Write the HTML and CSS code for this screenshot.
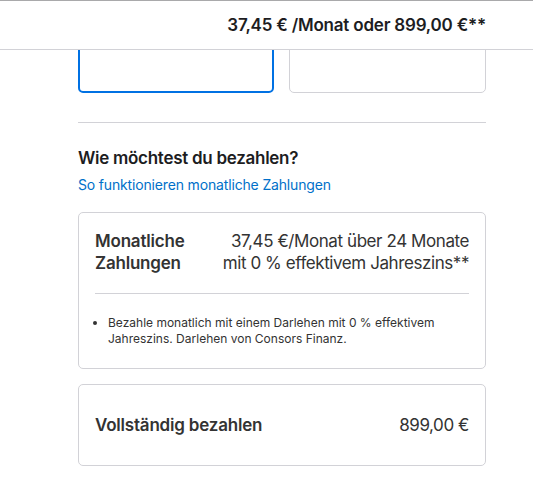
FILE: index.html
```html
<!DOCTYPE html>
<html lang="de">
<head>
<meta charset="utf-8">
<title>Bezahlen</title>
<link rel="stylesheet" href="styles.css">
</head>
<body>
<header class="summary-bar">
  <div class="summary-inner">
    <span class="summary-price">37,45 € /Monat oder 899,00 €**</span>
  </div>
</header>
<main class="page">
  <div class="choice-row">
    <div class="choice choice-selected"></div>
    <div class="choice"></div>
  </div>
  <hr class="section-rule">
  <section class="payment">
    <h2 class="payment-title">Wie möchtest du bezahlen?</h2>
    <a class="payment-link" href="#">So funktionieren monatliche Zahlungen</a>
    <div class="option">
      <div class="option-head">
        <div class="option-name">Monatliche<br>Zahlungen</div>
        <div class="option-price">37,45 €/Monat über 24 Monate<br>mit 0 % effektivem Jahreszins**</div>
      </div>
      <div class="option-body">
        <ul class="option-notes">
          <li>Bezahle monatlich mit einem Darlehen mit 0 % effektivem Jahreszins. Darlehen von Consors Finanz.</li>
        </ul>
      </div>
    </div>
    <div class="option option-full">
      <div class="option-head option-head-center">
        <div class="option-name">Vollständig bezahlen</div>
        <div class="option-price">899,00 €</div>
      </div>
    </div>
  </section>
</main>
</body>
</html>
```
FILE: styles.css
```css
* { box-sizing: border-box; }
html, body { margin: 0; padding: 0; background: #fff; }
body {
  font-family: Inter, "Liberation Sans", sans-serif;
  color: #1d1d1f;
  -webkit-font-smoothing: antialiased;
}
.summary-bar {
  position: fixed;
  top: 0; left: 0; right: 0;
  height: 50px;
  background: #fff;
  border-top: 1px solid #a9a9ab;
  border-bottom: 1px solid #d2d2d7;
  z-index: 10;
}
.summary-inner {
  width: 408px;
  margin-left: 78px;
  height: 100%;
  display: flex;
  justify-content: flex-end;
  align-items: center;
  padding-bottom: 1px;
}
.summary-price {
  font-size: 17px;
  font-weight: 600;
  letter-spacing: -0.2px;
  color: #1d1d1f;
}
.page {
  width: 408px;
  margin-left: 78px;
}
.choice-row {
  display: grid;
  grid-template-columns: 196px 197px;
  column-gap: 15px;
}
.choice {
  height: 93px;
  border: 1px solid #d2d2d7;
  border-radius: 5px;
}
.choice-selected {
  border: 2px solid #0071e3;
}
.section-rule {
  border: 0;
  border-top: 1px solid #d2d2d7;
  margin: 29px 0 0;
  height: 0;
}
.payment {
  padding-top: 24px;
}
.payment-title {
  margin: 0;
  font-size: 17px;
  line-height: 22px;
  font-weight: 600;
  letter-spacing: -0.28px;
}
.payment-link {
  display: block;
  margin-top: 6px;
  font-size: 14px;
  line-height: 20px;
  color: #0070c9;
  text-decoration: none;
  letter-spacing: -0.16px;
}
.option {
  margin-top: 17px;
  border: 1px solid #d2d2d7;
  border-radius: 5px;
  padding: 17px 16px 0;
  color: #333;
}
.option + .option { margin-top: 15px; }
.option-head {
  display: flex;
  justify-content: space-between;
  font-size: 17px;
  line-height: 22px;
  letter-spacing: -0.2px;
}
.option-name { font-weight: 600; }
.option-price { text-align: right; font-weight: 400; letter-spacing: -0.42px; }
.option-full { padding: 29px 16px; }
.option-head-center { align-items: center; }
.option-body {
  margin-top: 19px;
  border-top: 1px solid #d2d2d7;
  padding: 21px 0 21px;
}
.option-notes {
  margin: 0;
  padding: 0 0 0 13px;
  font-size: 12px;
  line-height: 16px;
  color: #333;
}
.option-notes li { padding-left: 0; }
```
